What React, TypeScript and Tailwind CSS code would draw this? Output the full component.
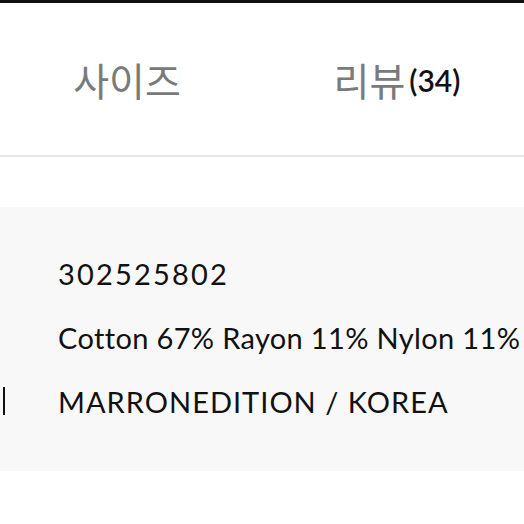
import React from "react";

const latin = { fontFamily: "Lato, 'Noto Sans', sans-serif" } as React.CSSProperties;
const kr = { fontFamily: "'Noto Sans CJK KR', 'Noto Sans', sans-serif" } as React.CSSProperties;

export default function App() {
  const rows = [
    { bar: false, text: "302525802", track: "tracking-[0.075em]" },
    { bar: false, text: "Cotton 67% Rayon 11% Nylon 11%", track: "tracking-[0.012em]" },
    { bar: true, text: "MARRONEDITION / KOREA", track: "tracking-[0.035em]" },
  ];
  return (
    <div className="w-[524px] h-[524px] bg-white overflow-hidden flex flex-col">
      <div className="h-[3px] bg-[#111] shrink-0" />
      <div className="h-[152px] shrink-0 grid grid-cols-2 items-center">
        <div className="flex justify-center mr-[8px]">
          <span className="text-[39px] leading-none text-[#7a7a7a]" style={kr}>
            사이즈
          </span>
        </div>
        <div className="flex justify-center items-center ml-[8px]">
          <span className="text-[39px] leading-none text-[#7a7a7a]" style={kr}>
            리뷰
          </span>
          <span className="text-[30px] leading-none text-[#111] font-semibold ml-[4px] mt-[2px]" style={latin}>
            (34)
          </span>
        </div>
      </div>
      <div className="h-[2px] bg-[#e8e8e8] shrink-0" />
      <div className="h-[50px] shrink-0" />
      <div className="h-[264px] shrink-0 bg-[#f8f8f8] pt-[35px] flex flex-col">
        {rows.map((r, i) => (
          <div key={i} className="flex h-[64px] items-stretch">
            <div className="w-[58px] shrink-0 relative">
              {r.bar && <div className="absolute left-[3px] top-[17px] w-[2px] h-[28px] bg-[#111]" />}
            </div>
            <div
              className={`text-[29px] leading-[64px] text-[#111] whitespace-nowrap ${r.track}`}
              style={latin}
            >
              {r.text}
            </div>
          </div>
        ))}
      </div>
    </div>
  );
}
